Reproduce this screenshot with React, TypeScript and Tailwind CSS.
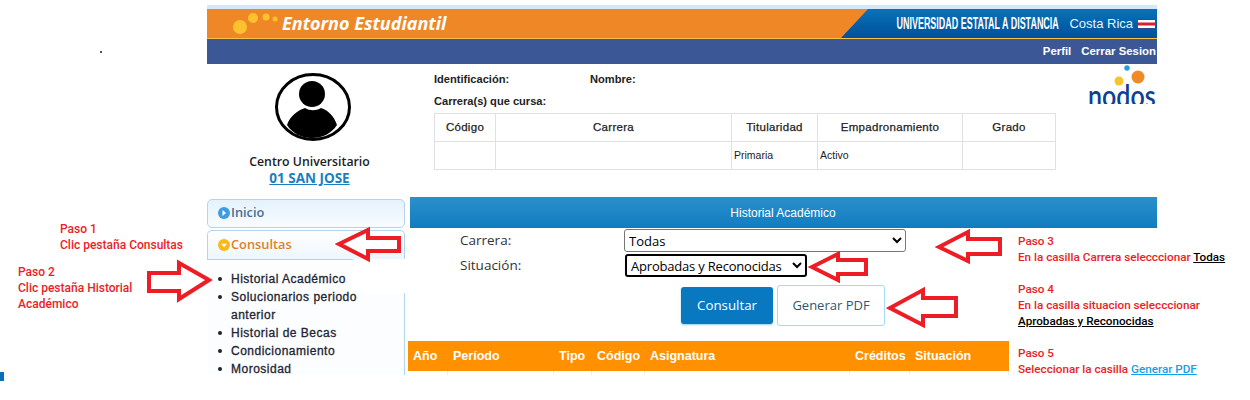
import React from "react";

const arial = "font-['Liberation_Sans',Arial,sans-serif]";
const note = "font-['Roboto',sans-serif] font-medium text-[12px] leading-[16px] text-[#ee1c25]";
const noteRight = "font-['Roboto',sans-serif] font-medium text-[11.7px] leading-[16px] text-[#ee1c25]";

function Arrow({ points, x, y, w, h }: { points: string; x: number; y: number; w: number; h: number }) {
  return (
    <svg className="absolute" style={{ left: x, top: y }} width={w} height={h} viewBox={`${x} ${y} ${w} ${h}`}>
      <polygon points={points} fill="#fff" stroke="#ee1c25" strokeWidth="4" strokeLinejoin="miter" />
    </svg>
  );
}

function Avatar() {
  return (
    <svg className="ml-[7px]" width="78" height="70" viewBox="0 0 78 70">
      <ellipse cx="39" cy="35" rx="36.5" ry="32.5" fill="#fff" stroke="#000" strokeWidth="3" />
      <circle cx="38" cy="22" r="13" fill="#000" />
      <path d="M13 53 C16 44 24 38 31 36 C36 39 42 39 47 36 C54 38 60 44 63 53 C57 62 48 66 38 66 C28 66 19 62 13 53 Z" fill="#000" />
    </svg>
  );
}

const cols = [
  ["w-[61px]", "Código"],
  ["w-[236px]", "Carrera"],
  ["w-[86px]", "Titularidad"],
  ["w-[145px]", "Empadronamiento"],
  ["w-[93px]", "Grado"],
];

const orangeCols = [
  ["w-[40px]", "Año"],
  ["w-[106px]", "Período"],
  ["w-[38px]", "Tipo"],
  ["w-[53px]", "Código"],
  ["w-[205px]", "Asignatura"],
  ["w-[60px]", "Créditos"],
  ["w-[99px]", "Situación"],
];

export default function App() {
  return (
    <div className="relative h-[400px] w-[1250px] overflow-hidden bg-white">
      <div className="ml-[207px] flex h-[375px] w-[950px] flex-col overflow-hidden pt-[5px]">
        {/* Header */}
        <div className="h-[4px] bg-[#d6e8f8]" />
        <div className="relative flex h-[29px] bg-[#f08727]">
          <div className="flex items-center pl-[26px]">
            <svg width="50" height="29" viewBox="0 0 50 29">
              <circle cx="7" cy="18" r="7" fill="#fcc22d" />
              <circle cx="20" cy="9" r="5" fill="#fcc22d" />
              <circle cx="33" cy="8" r="3.5" fill="#fcc22d" />
              <circle cx="42" cy="10" r="2.5" fill="#fcc22d" />
            </svg>
            <span className="ml-[-1px] font-['Open_Sans',sans-serif] text-[18px] font-bold italic text-white">Entorno Estudiantil</span>
          </div>
          <div className="ml-auto flex h-[29px] w-[316px] items-center justify-end bg-gradient-to-b from-[#0a74b8] to-[#004f9a] pr-[2px] [clip-path:polygon(27px_0,100%_0,100%_100%,0_100%)]">
            <div className="flex w-[162px] shrink-0 justify-end">
              <span className={`${arial} shrink-0 origin-right scale-x-[0.56] whitespace-nowrap text-[16px] font-bold text-white`}>UNIVERSIDAD ESTATAL A DISTANCIA</span>
            </div>
            <span className={`${arial} ml-[11px] shrink-0 whitespace-nowrap text-[13px] font-medium text-[#e8f2fb]`}>Costa Rica</span>
            <svg className="ml-[5px] shrink-0" width="17" height="10" viewBox="0 0 17 10">
              <rect width="17" height="10" fill="#fff" />
              <rect width="17" height="1" fill="#2b4a9a" />
              <rect y="9" width="17" height="1" fill="#2b4a9a" />
              <rect y="3.5" width="17" height="3" fill="#d8202f" />
            </svg>
          </div>
        </div>
        <div className="h-[1px] bg-[#f7c24a]" />
        <div className={`${arial} flex h-[25px] items-center justify-end gap-[10px] bg-[#3c5796] text-[11.4px] font-bold text-white`}>
          <span>Perfil</span>
          <span className="mr-[1px]">Cerrar Sesion</span>
        </div>

        {/* Info */}
        <div className="flex h-[133px]">
          <div className="flex w-[205px] shrink-0 flex-col items-center pt-[8px]">
            <Avatar />
            <div className="mt-[11px] font-['Open_Sans',sans-serif] text-[12.3px] font-semibold leading-[17px] text-[#1c1c1c]">Centro Universitario</div>
            <div className="font-['Open_Sans',sans-serif] text-[13.5px] font-bold leading-[17px] text-[#1a7fc1] underline">01 SAN JOSE</div>
          </div>
          <div className={`${arial} ml-[22px] w-[622px] shrink-0 pt-[8px] text-[#222]`}>
            <div className="flex h-[14px] items-center text-[11.1px] font-bold">
              <span className="w-[156px]">Identificación:</span>
              <span>Nombre:</span>
            </div>
            <div className="mt-[8px] flex h-[14px] items-center text-[11.1px] font-bold">Carrera(s) que cursa:</div>
            <div className="mt-[5px] border-l border-t border-[#e0e1e8]">
              <div className="flex h-[28px]">
                {cols.map(([w, t]) => (
                  <div key={t} className={`${w} flex items-center justify-center border-b border-r border-[#e0e1e8] text-[11.5px] tracking-[0.3px] [-webkit-text-stroke:0.25px_#222]`}>{t}</div>
                ))}
              </div>
              <div className="flex h-[28px] text-[10.5px]">
                <div className="w-[61px] border-b border-r border-[#e0e1e8]" />
                <div className="w-[236px] border-b border-r border-[#e0e1e8]" />
                <div className="flex w-[86px] items-center border-b border-r border-[#e0e1e8] pl-[2px]">Primaria</div>
                <div className="flex w-[145px] items-center border-b border-r border-[#e0e1e8] pl-[2px]">Activo</div>
                <div className="w-[93px] border-b border-r border-[#e0e1e8]" />
              </div>
            </div>
          </div>
          <div className="relative ml-auto h-[40px] w-[68px] overflow-hidden">
            <svg className="absolute left-0 top-0" width="68" height="22" viewBox="0 0 68 22">
              <circle cx="38" cy="4" r="2.7" fill="#2a9ad8" />
              <circle cx="49" cy="13" r="6.5" fill="#f08a24" />
              <circle cx="30" cy="17" r="4.5" fill="#f7c52b" />
            </svg>
            <span className="absolute left-[-1px] top-[14px] origin-top scale-y-[1.25] font-['Lato',sans-serif] text-[25px] font-semibold leading-[26px] text-[#0b4192]">nodos</span>
          </div>
        </div>

        {/* Body */}
        <div className="flex min-h-0 flex-1 font-['Open_Sans',sans-serif]">
          <div className="flex w-[198px] shrink-0 flex-col pt-[2px]">
            <div className="flex h-[29px] items-center gap-[1px] rounded-[5px] border border-[#b3d4ee] bg-gradient-to-b from-[#e4f2fd] to-[#f8fcff] pb-[2px] pl-[10px]">
              <svg width="12" height="12" viewBox="0 0 12 12">
                <circle cx="6" cy="6" r="6" fill="#3e9ce0" />
                <path d="M4.5 3 L8 6 L4.5 9 Z" fill="#fff" />
              </svg>
              <span className="text-[12.8px] font-semibold text-[#4a6f93]">Inicio</span>
            </div>
            <div className="mt-[2px] flex h-[29px] shrink-0 items-center gap-[1px] rounded-t-[5px] border border-b-0 border-[#b3d4ee] bg-gradient-to-b from-[#fff] to-[#edf6fd] pb-[1px] pl-[10px]">
              <svg width="12" height="12" viewBox="0 0 12 12">
                <circle cx="6" cy="6" r="6" fill="#fdb813" />
                <path d="M3 4.8 L9 4.8 L6 8.2 Z" fill="#fff" />
              </svg>
              <span className="text-[12.8px] font-semibold text-[#e0821e]">Consultas</span>
            </div>
            <ul className={`${arial} min-h-0 flex-1 border-r border-t border-r-[#b3d4ee] border-t-[#b3d4ee] bg-[#fbfdfe] pl-[24px] pt-[10px] text-[12px] font-medium leading-[18px] tracking-[0.5px] text-[#1d2433] [-webkit-text-stroke:0.3px_#1d2433]`}>
              {["Historial Académico", "Solucionarios periodo anterior", "Historial de Becas", "Condicionamiento", "Morosidad"].map((t) => (
                <li key={t} className="relative list-none pr-[8px]">
                  <span className="absolute left-[-13px] top-[7px] h-[4px] w-[4px] rounded-full bg-[#222]" />
                  {t}
                </li>
              ))}
            </ul>
          </div>

          <div className="ml-[3px] flex min-w-0 flex-1 flex-col">
            <div className={`${arial} ml-[2px] flex h-[31px] shrink-0 items-center justify-center bg-gradient-to-b from-[#2a90ca] to-[#0f7cc0] pr-[1px] text-[12px] text-white`}>Historial Académico</div>
            <div className="flex h-[25px] items-center pl-[52px] text-[13.5px] text-[#333]">
              <span className="w-[164px]">Carrera:</span>
              <select className="h-[23px] w-[282px] rounded-[3px] border border-[#767676] text-[13px] text-black" defaultValue="Todas">
                <option>Todas</option>
              </select>
            </div>
            <div className="flex h-[25px] items-center pl-[52px] text-[13.5px] text-[#333]">
              <span className="w-[165px]">Situación:</span>
              <select className="h-[23px] w-[182px] rounded-[3px] border-2 border-black text-[13px] tracking-[-0.2px] text-black" defaultValue="Aprobadas y Reconocidas">
                <option>Aprobadas y Reconocidas</option>
              </select>
            </div>
            <div className="mt-[7px] flex h-[41px] items-center pl-[273px]">
              <button className="h-[37px] w-[92px] rounded-[3px] bg-[#0878c0] pt-[1px] text-[13.3px] text-white shadow-[0_1px_2px_#8fcdf5]">Consultar</button>
              <button className="ml-[4px] h-[41px] w-[108px] rounded-[3px] border border-[#a8d8f8] bg-white pt-[1px] text-[13px] text-[#31566f]">Generar PDF</button>
            </div>
            <div className={`${arial} mt-[15px] flex h-[30px] w-[601px] shrink-0 items-center bg-[#ff9100] text-[12.5px] font-bold text-white`}>
              {orangeCols.map(([w, t]) => (
                <div key={t} className={`${w} shrink-0 pl-[5px]`}>{t}</div>
              ))}
            </div>
            <div className="flex h-[4px] w-[601px]">
              {orangeCols.map(([w, t]) => (
                <div key={t} className={`${w} shrink-0 border-r border-[#eeeeee]`} />
              ))}
            </div>
          </div>
        </div>
      </div>

      {/* Annotations */}
      <div className="absolute left-[100px] top-[51px] h-[2px] w-[2px] bg-[#555]" />
      <div className="absolute left-0 top-[372px] h-[9px] w-[4px] bg-[#0a6eb8]" />
      <div className="absolute left-[353px] top-[259px] h-[34px] w-[53px] bg-white" />

      <Arrow x={335} y={226} w={70} h={38} points="339,244 368,230 368,238 399,238 399,251 368,251 368,259" />
      <Arrow x={145} y={259} w={70} h={44} points="209,280 179,263 179,273 149,273 149,291 179,291 179,299" />
      <Arrow x={935} y={228} w={70} h={38} points="939,247 968,232 968,239 1000,239 1000,254 968,254 968,261" />
      <Arrow x={807} y={250} w={64} h={34} points="812,267 838,254 838,260 866,260 866,274 838,274 838,280" />
      <Arrow x={886} y={286} w={74} h={44} points="890,308 923,290 923,298 956,298 956,316 923,316 923,325" />

      <div className={`absolute left-[60px] top-[221px] ${note}`}>
        <div>Paso 1</div>
        <div>Clic pestaña Consultas</div>
      </div>
      <div className={`absolute left-[18px] top-[264px] w-[125px] ${note}`}>
        <div>Paso 2</div>
        <div>Clic pestaña Historial Académico</div>
      </div>
      <div className={`absolute left-[1018px] top-[233px] ${noteRight}`}>
        <div>Paso 3</div>
        <div>En la casilla Carrera selecccionar <span className="text-black underline">Todas</span></div>
      </div>
      <div className={`absolute left-[1018px] top-[281px] ${noteRight}`}>
        <div>Paso 4</div>
        <div>En la casilla situacion selecccionar</div>
        <div className="text-black underline">Aprobadas y Reconocidas</div>
      </div>
      <div className={`absolute left-[1018px] top-[345px] ${noteRight}`}>
        <div>Paso 5</div>
        <div>Seleccionar la casilla <span className="text-[#12a0e8] underline">Generar PDF</span></div>
      </div>
    </div>
  );
}
